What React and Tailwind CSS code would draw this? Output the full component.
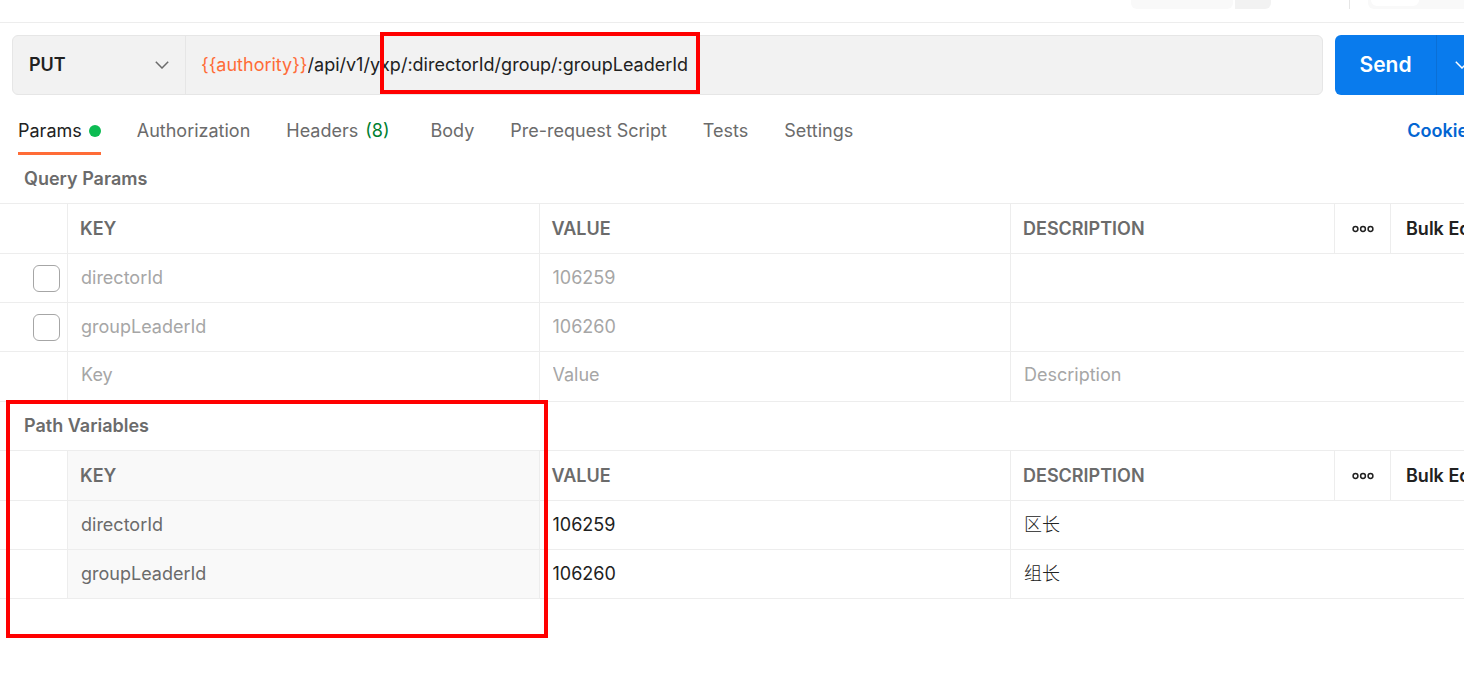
import { useState } from "react";

const TABS = [
  { name: "Params", dot: true },
  { name: "Authorization" },
  { name: "Headers", count: 8 },
  { name: "Body" },
  { name: "Pre-request Script" },
  { name: "Tests" },
  { name: "Settings" },
];

const QUERY_PARAMS = [
  { key: "directorId", value: "106259" },
  { key: "groupLeaderId", value: "106260" },
];

const PATH_VARIABLES = [
  { key: "directorId", value: "106259", description: "区长" },
  { key: "groupLeaderId", value: "106260", description: "组长" },
];

function Chevron({ className }) {
  return (
    <svg className={className} width="14" height="8" viewBox="0 0 14 8" fill="none" stroke="currentColor" strokeWidth="1.5" aria-hidden="true">
      <path d="M0.8 0.8 7 7 13.2 0.8" />
    </svg>
  );
}

function MoreIcon() {
  return (
    <svg width="22" height="8" viewBox="0 0 22 8" fill="none" stroke="currentColor" strokeWidth="1.5" aria-hidden="true">
      <circle cx="3.5" cy="4" r="2.4" />
      <circle cx="11" cy="4" r="2.4" />
      <circle cx="18.5" cy="4" r="2.4" />
    </svg>
  );
}

function TopStrip() {
  return (
    <div className="flex h-[23px] items-start justify-end border-b border-[#ededed]">
      <div className="h-[9px] w-[102px] rounded-b-md bg-[#f9f9f9]" />
      <div className="ml-0.5 h-[9px] w-9 rounded-br-md bg-[#f2f2f2]" />
      <div className="ml-[78px] h-[9px] w-px bg-[#e6e6e6]" />
      <div className="ml-[18px] h-[9px] w-[132px] rounded-b-md bg-[#f9f9f9] px-[3px]">
        <div className="h-1.5 w-12 rounded-b-md bg-white" />
      </div>
    </div>
  );
}

function RequestBar() {
  return (
    <form className="flex gap-3 pt-3 pr-3.5 pl-3" onSubmit={(e) => e.preventDefault()}>
      <div className="flex h-[60px] min-w-0 flex-1 items-stretch rounded-md border border-[#e6e6e6] bg-[#f2f2f2]">
        <div className="relative flex w-[173px] shrink-0 items-center border-r border-[#e6e6e6]">
          <select aria-label="Method" defaultValue="PUT" className="h-full w-full appearance-none bg-transparent pl-4 font-semibold text-[#212121] outline-none">
            <option>GET</option>
            <option>POST</option>
            <option>PUT</option>
            <option>DELETE</option>
          </select>
          <Chevron className="pointer-events-none absolute right-4 text-[#6b6b6b]" />
        </div>
        <label className="flex min-w-0 flex-1 items-center pl-[15px]">
          <span className="text-[#ff6c37]">{"{{authority}}"}</span>
          <input aria-label="Request URL" defaultValue="/api/v1/yxp/:directorId/group/:groupLeaderId" className="min-w-0 flex-1 bg-transparent text-[#212121] outline-none" />
        </label>
      </div>
      <div className="flex h-[60px] shrink-0 overflow-hidden rounded-md bg-[#097bed] text-white">
        <button type="submit" className="w-[101px] text-[21px] font-semibold">Send</button>
        <button type="button" aria-label="Send options" className="flex w-[50px] items-center justify-center border-l border-[#0a6fd6]">
          <Chevron />
        </button>
      </div>
    </form>
  );
}

function Tabs() {
  const [active, setActive] = useState("Params");
  return (
    <div className="flex h-[60px] items-stretch justify-between pr-[22px] pl-[18px]">
      <nav className="flex items-stretch gap-9">
        {TABS.map((tab) => (
          <button
            key={tab.name}
            type="button"
            onClick={() => setActive(tab.name)}
            className={
              "flex items-center gap-[7px] border-b-3 pt-[18px] pb-1 " +
              (tab.name === active ? "border-[#ff6c37] text-[#212121]" : "border-transparent text-[#6b6b6b]")
            }
          >
            {tab.name}
            {tab.dot && <span className="size-3 rounded-full bg-[#0cbb52]" />}
            {tab.count && <span className="pr-[5px] text-[#007f31]">({tab.count})</span>}
          </button>
        ))}
      </nav>
      <a href="#cookies" className="pt-6 font-semibold text-[#0265d2]">Cookies</a>
    </div>
  );
}

const cell = "border-b border-l border-[#ededed] p-0";
const field = "h-full w-full bg-transparent pr-3 pl-[13px] outline-none placeholder:text-[#a6a6a6]";

function ParamTable({ label, muted, tintKeys, children }) {
  return (
    <section aria-label={label}>
      <h2 className="flex h-12 items-center pl-6 font-semibold text-[#6b6b6b]">{label}</h2>
      <table className="w-full table-fixed border-separate border-spacing-0 border-t border-[#ededed] text-left">
        <colgroup>
          <col className="w-[67px]" />
          <col />
          <col />
          <col className="w-[324px]" />
          <col className="w-[56px]" />
          <col className="w-[110px]" />
        </colgroup>
        <thead>
          <tr className="h-[50px] text-[#6b6b6b]">
            <td className="border-b border-[#ededed]" />
            <th className={cell + " pl-3 font-semibold" + (tintKeys ? " bg-[#f9f9f9]" : "")}>KEY</th>
            <th className={cell + " pl-3 font-semibold"}>VALUE</th>
            <th className={cell + " pl-3 font-semibold"}>DESCRIPTION</th>
            <td className={cell}>
              <button type="button" aria-label="Column options" className="flex w-full items-center justify-center text-[#212121]">
                <MoreIcon />
              </button>
            </td>
            <td className={cell}>
              <button type="button" className="pl-[15px] font-semibold whitespace-nowrap text-[#212121]">Bulk Edit</button>
            </td>
          </tr>
        </thead>
        <tbody className={muted ? "text-[#a6a6a6]" : "text-[#212121]"}>{children}</tbody>
      </table>
    </section>
  );
}

export default function App() {
  return (
    <div className="relative min-h-screen overflow-hidden bg-white font-['Inter','Noto_Sans_CJK_SC',sans-serif] text-[18px] leading-6">
      <div className="w-[calc(100%+36px)]">
        <TopStrip />
        <RequestBar />
        <Tabs />

        <ParamTable label="Query Params" muted>
          {QUERY_PARAMS.map((p) => (
            <tr key={p.key} className="h-[49px]">
              <td className="border-b border-[#ededed] p-0 pl-[33px]">
                <input type="checkbox" aria-label={"Include " + p.key} className="block size-[27px] appearance-none rounded-md border border-[#a6a6a6] bg-white checked:bg-[#ff6c37]" />
              </td>
              <td className={cell}><input aria-label="Key" defaultValue={p.key} className={field} /></td>
              <td className={cell}><input aria-label="Value" defaultValue={p.value} className={field} /></td>
              <td className={cell} colSpan={3}><input aria-label="Description" className={field} /></td>
            </tr>
          ))}
          <tr className="h-[50px]">
            <td className="border-b border-[#ededed]" />
            <td className={cell + " pb-1"}><input aria-label="New key" placeholder="Key" className={field} /></td>
            <td className={cell + " pb-1"}><input aria-label="New value" placeholder="Value" className={field} /></td>
            <td className={cell + " pb-1"} colSpan={3}><input aria-label="New description" placeholder="Description" className={field} /></td>
          </tr>
        </ParamTable>

        <ParamTable label="Path Variables" tintKeys>
          {PATH_VARIABLES.map((p) => (
            <tr key={p.key} className="h-[49px]">
              <td className="border-b border-[#ededed]" />
              <td className={cell + " bg-[#f9f9f9] text-[#6b6b6b]"}><input aria-label="Key" readOnly value={p.key} className={field} /></td>
              <td className={cell}><input aria-label="Value" defaultValue={p.value} className={field} /></td>
              <td className={cell} colSpan={3}><input aria-label="Description" defaultValue={p.description} className={field + " font-light"} /></td>
            </tr>
          ))}
        </ParamTable>
      </div>

      <div className="pointer-events-none absolute top-8 left-[380px] h-[62px] w-[320px] border-4 border-[#ff0000]" />
      <div className="pointer-events-none absolute top-[400px] left-1.5 h-[238px] w-[542px] border-4 border-[#ff0000]" />
    </div>
  );
}
